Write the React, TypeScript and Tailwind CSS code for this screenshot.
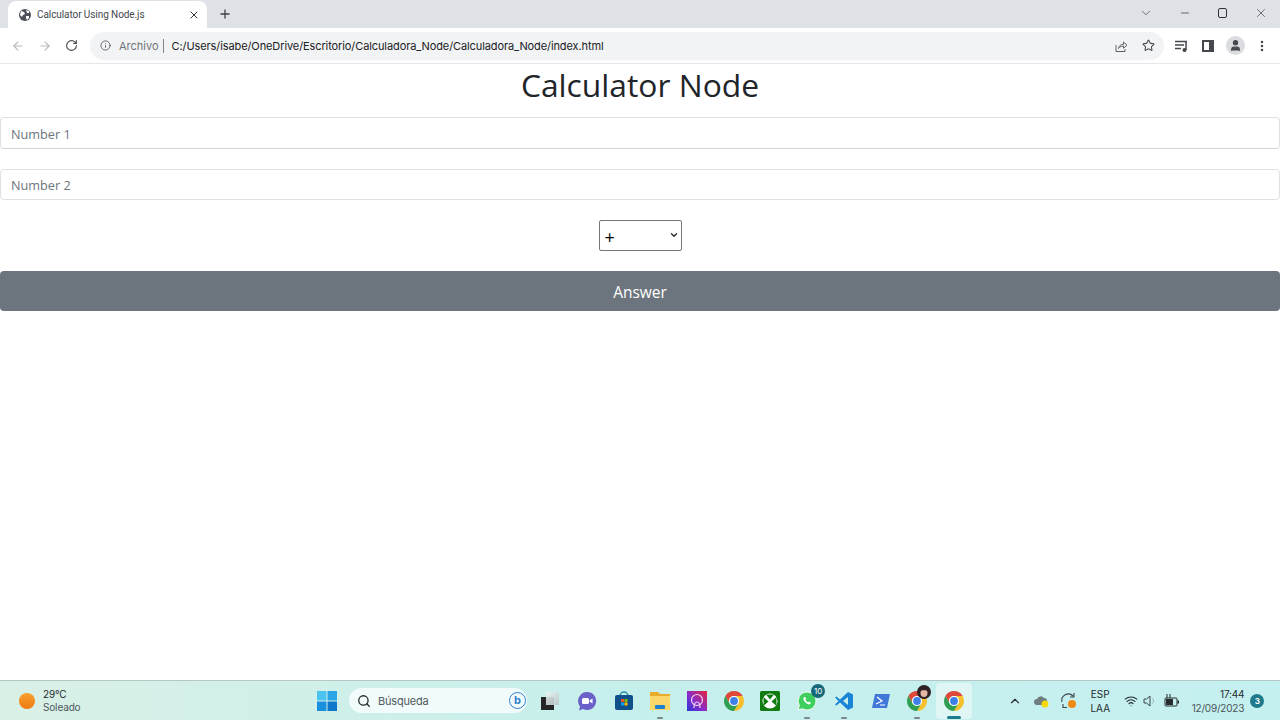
import { ArrowLeft, ArrowRight, RotateCw, Info, Star, ChevronDown, ChevronUp, Minus, X, Plus, Search, EllipsisVertical, User, Wifi } from "lucide-react";

function Globe() {
  return (
    <svg width="14" height="14" viewBox="0 0 14 14">
      <circle cx="7" cy="7" r="6" fill="#4b5157" />
      <path d="M3 3l3 1 1 2-2 1-1 2-2-2zM8 2l3 1 0 2-2 0zM8 8l3 0 0 2-2 2-1-2z" fill="#fff" />
    </svg>
  );
}

function Chrome({ size = 20 }: { size?: number }) {
  return (
    <svg width={size} height={size} viewBox="2 2 20 20">
      <path d="M3.34 7A10 10 0 0 1 20.66 7L12 7A5 5 0 0 0 7.67 14.5Z" fill="#e0483a" />
      <path d="M20.66 7A10 10 0 0 1 12 22L16.33 14.5A5 5 0 0 0 12 7Z" fill="#f5c02c" />
      <path d="M12 22A10 10 0 0 1 3.34 7L7.67 14.5A5 5 0 0 0 16.33 14.500Z" fill="#2f9e50" />
      <circle cx="12" cy="12" r="5" fill="#fff" />
      <circle cx="12" cy="12" r="3.900" fill="#3f80e8" />
    </svg>
  );
}

function WinLogo() {
  return (
    <svg width="20" height="20" viewBox="0 0 20 20">
      <rect x="0" y="0" width="9.5" height="9.5" fill="#4cc2f1" />
      <rect x="10.5" y="0" width="9.5" height="9.5" fill="#2aa5e6" />
      <rect x="0" y="10.5" width="9.5" height="9.5" fill="#1a8fdc" />
      <rect x="10.5" y="10.5" width="9.5" height="9.5" fill="#0f78cc" />
    </svg>
  );
}

function Slot({ children, dot, active }: { children: React.ReactNode; dot?: boolean; active?: boolean }) {
  return (
    <div className={`relative flex h-[36px] w-[36.7px] shrink-0 items-center justify-center rounded ${active ? "bg-[#dff6f5]" : ""}`}>
      {children}
      {dot && <div className="absolute bottom-0 h-[2px] w-[6px] rounded bg-[#7d8a8c]" />}
      {active && <div className="absolute bottom-0 h-[3px] w-[14px] rounded bg-[#1f7a8c]" />}
    </div>
  );
}

export default function App() {
  return (
    <div className="flex h-[720px] w-[1280px] flex-col overflow-hidden bg-white font-['Open_Sans',sans-serif]">
      {/* tab strip */}
      <div className="flex h-[28px] items-end bg-[#dee1e6] pl-[8px]">
        <div className="flex h-[27px] w-[199px] items-center rounded-t-lg bg-white pl-[10px] pr-[7px]">
          <Globe />
          <span className="ml-[5px] flex-1 truncate font-['Roboto',sans-serif] text-[10px] tracking-[-0.08px] text-[#45494e]">Calculator Using Node.js</span>
          <X size={12} strokeWidth={2} className="text-[#2f3134]" />
        </div>
        <Plus size={14} strokeWidth={2.2} className="mb-[7px] ml-[11px] text-[#3c4043]" />
        <div className="mb-[8px] ml-auto flex items-center text-[#3c4043]">
          <ChevronDown size={14} strokeWidth={1.2} className="mr-[26px]" />
          <Minus size={12} strokeWidth={1.5} className="mr-[27px]" />
          <div className="mr-[27px] h-[10px] w-[9px] rounded-[2px] border-[1.5px] border-[#2f3134]" />
          <X size={14} strokeWidth={1.2} className="mr-[12px]" />
        </div>
      </div>

      {/* toolbar */}
      <div className="flex h-[36px] items-center border-b border-[#e5e7eb] bg-white pl-[11px]">
        <ArrowLeft size={14} className="text-[#b6b9bd]" />
        <ArrowRight size={14} className="ml-[13px] text-[#b6b9bd]" />
        <RotateCw size={13} strokeWidth={2.2} className="ml-[13px] text-[#4f5357]" />
        <div className="ml-[12px] flex h-[28px] w-[1074px] items-center rounded-full bg-[#f1f3f4] pl-[10px] pr-[9px]">
          <Info size={11} strokeWidth={2} className="text-[#5f6368]" />
          <span className="ml-[8px] pt-[2px] font-['Inter',sans-serif] text-[11px] text-[#70757a]">Archivo</span>
          <div className="ml-[4px] h-[14px] w-px bg-[#80868b]" />
          <span className="ml-[8px] pt-[2px] font-['Inter',sans-serif] text-[11px] tracking-[-0.1px] text-[#202124]">C:/Users/isabe/OneDrive/Escritorio/Calculadora_Node/Calculadora_Node/index.html</span>
          <svg width="14" height="14" viewBox="0 0 14 14" fill="none" stroke="#5f6368" strokeWidth="1" className="ml-auto">
            <path d="M2 6v6.500h9V10" />
            <path d="M4.500 9.500C5 6.500 7 5.300 9.500 5.300V3l3.500 3.200-3.500 3V7C7.500 7 5.800 7.800 4.500 9.500z" />
          </svg>
          <Star size={13} strokeWidth={2} className="ml-[14px] text-[#45494e]" />
        </div>
        <svg width="14" height="12" viewBox="0 0 14 12" fill="none" stroke="#45494e" strokeWidth="1.500" className="ml-[11px]">
          <path d="M0 1.500h12M0 5h9M0 8.500h6" />
          <path d="M11 2v8" />
          <circle cx="9.500" cy="10" r="1.300" fill="#45494e" />
        </svg>
        <div className="ml-[13px] flex h-[12px] w-[12px] justify-end border-2 border-[#45494e]">
          <div className="h-full w-[3px] bg-[#45494e]" />
        </div>
        <div className="ml-[12px] flex h-[19px] w-[19px] items-center justify-center rounded-full bg-[#dadce0]">
          <User size={13} fill="#45494e" className="text-[#45494e]" />
        </div>
        <EllipsisVertical size={14} strokeWidth={2.4} className="ml-[10px] text-[#45494e]" />
      </div>

      {/* page */}
      <div className="flex flex-1 flex-col">
        <h1 className="pb-[1px] text-center text-[31.8px] leading-[42px] text-[#212529]">Calculator Node</h1>
        <input placeholder="Number 1" className="mt-[10px] h-[32px] rounded border border-[#dee2e6] border-b-[#d0d4d8] px-[10px] pt-[1px] text-[12.7px] outline-none placeholder:text-[#6c757d]" />
        <input placeholder="Number 2" className="mt-[20px] h-[31px] rounded border border-[#dee2e6] px-[10px] text-[12.7px] outline-none placeholder:text-[#6c757d]" />
        <div className="mt-[20px] flex justify-center">
          <div className="relative">
            <select className="block h-[31px] w-[83px] appearance-none rounded-[2px] border border-[#767676] bg-white pl-[5px] pt-[3px] text-[18px] text-black">
              <option>+</option>
            </select>
            <ChevronDown size={10} strokeWidth={3} className="absolute right-[3px] top-[10px] text-[#222]" />
          </div>
        </div>
        <button className="mt-[20px] h-[40px] rounded bg-[#6c757d] pt-[3px] text-[15.5px] text-white">Answer</button>
      </div>

      {/* taskbar */}
      <div className="flex h-[40px] items-center border-t border-[#b5c7c5] bg-gradient-to-r from-[#d9f0e6] via-[#c6efec] to-[#c5f0f0] font-['Inter',sans-serif]">
        <div className="ml-[19px] h-[16px] w-[16px] rounded-full bg-gradient-to-b from-[#f7a02c] to-[#ee7a12]" />
        <div className="ml-[8px] w-[274px] text-[10px] leading-[13px] tracking-[-0.15px]">
          <div className="text-[#1f2a2c]">29°C</div>
          <div className="text-[#4d5a5c]">Soleado</div>
        </div>
        <WinLogo />
        <div className="ml-[12px] flex h-[25px] w-[178px] items-center rounded-full bg-[#f1fbfb] pl-[8px] pr-[1px]">
          <Search size={14} strokeWidth={2.2} className="text-[#262b2d]" />
          <span className="ml-[7px] pt-[2px] text-[11px] tracking-[-0.2px] text-[#4f5a5c]">Búsqueda</span>
          <div className="ml-auto flex h-[17px] w-[17px] items-center justify-center rounded-full border-[1.5px] border-[#2f7fd1] text-[11px] font-bold leading-none text-[#2f7fd1]">b</div>
        </div>
        <div className="flex items-center pl-[5px]">
          <Slot>
            <svg width="20" height="20" viewBox="0 0 20 20">
              <defs>
                <linearGradient id="desk" x1="0" y1="0" x2="1" y2="1">
                  <stop offset="0" stopColor="#eef3f3" />
                  <stop offset="1" stopColor="#b9c6c6" />
                </linearGradient>
              </defs>
              <rect x="1" y="6" width="13" height="13" fill="#262626" />
              <rect x="6" y="1" width="13" height="13" fill="url(#desk)" opacity="0.9" />
            </svg>
          </Slot>
          <Slot>
            <svg width="20" height="20" viewBox="0 0 20 20">
              <path d="M10 1a9 9 0 1 1-4 17l-4 1.500 1-4A9 9 0 0 1 10 1z" fill="#6a62c8" />
              <rect x="5" y="7" width="7" height="6" rx="1.500" fill="#fff" />
              <path d="M12.500 9.500l3-2v5l-3-2z" fill="#fff" />
            </svg>
          </Slot>
          <Slot>
            <svg width="20" height="20" viewBox="0 0 20 20">
              <path d="M6 5a4 4 0 0 1 8 0" fill="none" stroke="#1f8fa8" strokeWidth="1.500" />
              <rect x="1" y="4" width="18" height="15" rx="2" fill="#0f4f8a" />
              <rect x="7" y="8" width="3" height="3" fill="#f25022" />
              <rect x="10.500" y="8" width="3" height="3" fill="#7fba00" />
              <rect x="7" y="11.500" width="3" height="3" fill="#00a4ef" />
              <rect x="10.500" y="11.500" width="3" height="3" fill="#ffb900" />
            </svg>
          </Slot>
          <Slot dot>
            <svg width="20" height="20" viewBox="0 0 20 20">
              <path d="M0 1h8l2 2h10v15H0z" fill="#e8ab2a" />
              <rect x="0" y="5" width="20" height="14" fill="#fbd669" />
              <rect x="5" y="14" width="10" height="4" rx="1" fill="#1d7fd0" />
            </svg>
          </Slot>
          <Slot>
            <svg width="20" height="20" viewBox="0 0 20 20">
              <defs>
                <linearGradient id="pod" x1="1" y1="0" x2="0" y2="1">
                  <stop offset="0" stopColor="#e8243c" />
                  <stop offset="0.55" stopColor="#8a2cc8" />
                  <stop offset="1" stopColor="#2a35d8" />
                </linearGradient>
              </defs>
              <rect width="20" height="20" fill="url(#pod)" />
              <circle cx="10" cy="9" r="5.500" fill="none" stroke="#f0d8ee" strokeWidth="1.200" />
              <path d="M7 17c0-5 1-6 3-6s3 1 3 6" fill="none" stroke="#f0d8ee" strokeWidth="1.200" />
            </svg>
          </Slot>
          <Slot><Chrome /></Slot>
          <Slot>
            <svg width="20" height="20" viewBox="0 0 20 20">
              <rect width="20" height="20" rx="1.500" fill="#107c10" />
              <circle cx="10" cy="10" r="7.500" fill="#fff" />
              <path d="M10 8.500L6 3.500h8zM8.500 10.500L3.500 6v9zM11.500 10.500L16.500 6v9z" fill="#107c10" />
            </svg>
          </Slot>
          <Slot dot>
            <div className="relative">
              <svg width="20" height="20" viewBox="0 0 20 20">
                <path d="M10 1a9 9 0 0 0-7.700 13.600L1 19l4.500-1.200A9 9 0 1 0 10 1z" fill="#3ecf5e" stroke="#fff" strokeWidth="1" />
                <path d="M7 6c-1 1-1 3 1 5s4 3 5 2l1-1-2-1.500-1 .7c-1-.4-2-1.400-2.400-2.400l.7-1L8 6z" fill="#fff" />
              </svg>
              <div className="absolute -right-[8px] -top-[7px] flex h-[14px] w-[14px] items-center justify-center rounded-full bg-[#17697a] text-[8px] text-white">10</div>
            </div>
          </Slot>
          <Slot dot>
            <svg width="20" height="20" viewBox="0 0 20 20">
              <path d="M14 1l5 2.500v13L14 19 6 11.500 2.500 14.500 1 13.500 4.500 10 1 6.500l1.500-1L6 8.500z" fill="#1a85d6" />
              <path d="M14 6v8l-5-4z" fill="#c6efec" />
            </svg>
          </Slot>
          <Slot>
            <svg width="20" height="20" viewBox="0 0 20 20">
              <path d="M4 3h15l-3 14H1z" fill="#3f78d8" />
              <path d="M6 6l5 4-6 3M9 14h5" fill="none" stroke="#fff" strokeWidth="1.200" />
            </svg>
          </Slot>
          <Slot dot>
            <div className="relative">
              <Chrome />
              <svg width="14" height="14" viewBox="0 0 14 14" className="absolute -right-[4px] -top-[6px]">
                <circle cx="7" cy="7" r="7" fill="#2e2224" />
                <ellipse cx="7" cy="8" rx="3.500" ry="4" fill="#e4b6a4" />
                <path d="M3 6c1-3 7-3 8 0-2-1-6-1-8 0z" fill="#2e2224" />
              </svg>
            </div>
          </Slot>
          <Slot active><Chrome /></Slot>
        </div>

        {/* tray */}
        <div className="ml-[36px] flex items-center text-[#262b2d]">
          <ChevronUp size={14} strokeWidth={2} />
          <svg width="16" height="14" viewBox="0 0 16 14" className="ml-[12px]">
            <path d="M3 11a3 3 0 0 1 0-6 4 4 0 0 1 7-1 3 3 0 0 1 3 4v3z" fill="#6f7c80" />
            <circle cx="11" cy="10" r="3.500" fill="#f5d90a" />
          </svg>
          <svg width="18" height="18" viewBox="0 0 18 18" className="ml-[10px]">
            <path d="M2 10a6.500 6.500 0 0 1 11-6M14 1v4h-4M7 15.500l-4 0 0-3.500" fill="none" stroke="#3a4548" strokeWidth="1.100" />
            <circle cx="12" cy="12" r="4" fill="#f08a12" />
          </svg>
          <div className="ml-[8px] w-[28px] text-center text-[10px] leading-[14px]">
            <div>ESP</div>
            <div>LAA</div>
          </div>
          <Wifi size={14} strokeWidth={1.800} className="ml-[10px]" />
          <svg width="16" height="14" viewBox="0 0 16 14" fill="none" stroke="#3a4548" strokeWidth="1" className="ml-[5px]">
            <path d="M1 5h2.500L7 2v10L3.500 9H1z" />
            <path d="M9.500 4.500a3.500 3.500 0 0 1 0 5" stroke="#9db0b2" />
          </svg>
          <svg width="16" height="14" viewBox="0 0 16 14" className="ml-[5px]">
            <rect x="1" y="4" width="12" height="8" rx="1" fill="none" stroke="#262b2d" />
            <rect x="2" y="5" width="7" height="6" fill="#262b2d" />
            <rect x="13.500" y="6.500" width="1.500" height="3" fill="#262b2d" />
            <path d="M3 0v4M6 0v4" stroke="#262b2d" />
          </svg>
          <div className="ml-[11px] w-[53px] text-right text-[10px] leading-[14px] tracking-[-0.2px]">
            <div>17:44</div>
            <div className="text-[#4b5557]">12/09/2023</div>
          </div>
          <div className="ml-[6px] flex h-[14px] w-[14px] items-center justify-center rounded-full bg-[#1f7a8c] text-[8px] font-bold text-white">3</div>
        </div>
      </div>
    </div>
  );
}
